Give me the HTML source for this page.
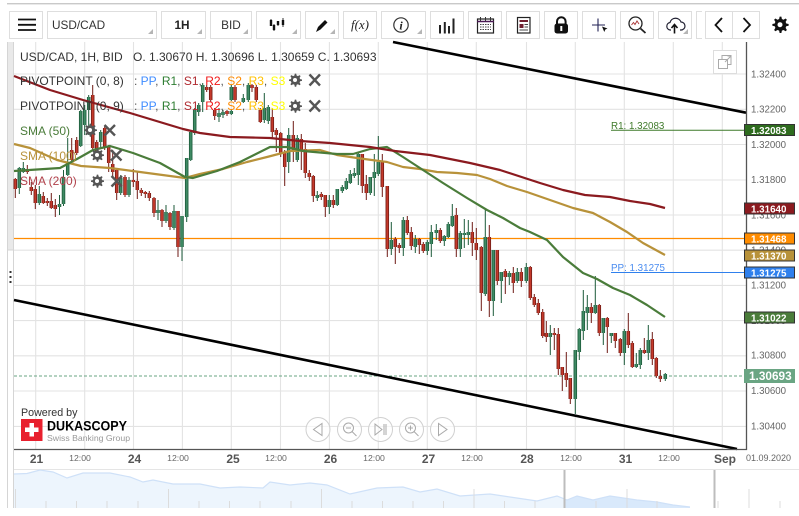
<!DOCTYPE html>
<html lang="en">
<head>
<meta charset="utf-8">
<title>USD/CAD chart</title>
<style>
html,body{margin:0;padding:0;background:#fff;width:799px;height:516px;overflow:hidden}
svg{display:block;font-family:"Liberation Sans",sans-serif;filter:blur(.3px)}
.b{fill:#fff;stroke:#dedede;stroke-width:1}
.tri{fill:#b5b5b5}
.ax{font-size:9.7px;fill:#666}
.tm{font-size:8.7px;fill:#666}
.dy{font-size:12px;font-weight:bold;fill:#555}
.tag{font-size:9.8px;font-weight:bold;fill:#fff}
.lb{font-size:12px;fill:#333}
.gear{fill:#555}
.xx{stroke:#555;stroke-width:2.4;fill:none}
</style>
</head>
<body>
<svg width="799" height="516" viewBox="0 0 799 516" xmlns="http://www.w3.org/2000/svg">
<defs>
<g id="gr"><path id="gearp" d="M0 -6.2l1.4 0 .4 1.9 1.3 .6 1.7 -1 1 1 -1 1.7 .5 1.3 1.9 .4 0 1.4 -1.9 .4 -.5 1.3 1 1.7 -1 1 -1.7 -1 -1.3 .5 -.4 1.9 -1.4 0 -.4 -1.9 -1.3 -.5 -1.7 1 -1 -1 1 -1.7 -.5 -1.3 -1.9 -.4 0 -1.4 1.9 -.4 .5 -1.3 -1 -1.7 1 -1 1.7 1 1.3 -.6z" transform="translate(-.7 -.7)"/></g>
<path id="gb" fill="none" d="M19.3 168V188M23.3 168V172M39.3 194V203M59.5 204V207M63.5 177V204M67.7 163V175M80.7 111V146M84.7 110V125M88.7 97V110M100.7 132V142M120.7 178V193M129 180V195M158 210V213M166 212V221M174 211V228M182 216V247M186.7 158V217M190.7 132V160M194.7 110V133M198.7 105V112M202.7 85V102M219 113V117M223 112V115M231.3 111V114M231.3 87V100M243.3 98V102M248.3 85V100M264.3 108V120M268.3 107V121M288.7 135V162M297.3 138V160M317.3 195V198M329.3 200V207M337.3 189V205M342.3 187V191M346.3 181V189M350.3 174V183M354.3 173V176M358.3 154V175M370.3 177V193M374.3 172V178M378.3 162V174M391.3 240V249M403.3 220V248M415.3 239V247M427.3 242V251M431.3 232V244M436.3 230V233M444.3 236V241M448.3 224V237M452.3 216V226M460.3 233V249M464.3 233V235M468.3 232V235M485.3 237V294M493.3 250V301M501.3 272V281M509.3 273V277M517.3 272V281M526.3 267V281M550.3 333V337M575.3 350V399M579.3 329V352M583.3 311V331M587.3 307V313M595.3 305V313M603.3 318V333M611.3 333V336M624.3 331V353M636.3 364V367M640.3 350V365M648.3 340V353M665.3 374V379"/>
<path id="rb" fill="none" d="M15.3 179V189M27.3 169V172M31.3 187V191M35.3 189V203M43.3 196V203M47.3 201V203M51.3 201V208M55.3 205V209M71.7 150V160M76.7 140V153M92.7 95V148M96.7 142V152M104.7 128V148M108.7 147V163M112.7 164V172M116.7 170V193M125 177V195M133.3 180V182M137.3 181V190M141.3 190V193M145.3 192V194M149.3 193V198M154 198V213M162 210V221M170 213V227M178 211V247M206.7 87V90M210.7 87V100M214.7 110V116M227 111V114M235 87V100M252 85V88M256.3 87V100M260.3 110V122M272.3 117V132M276.3 130V135M280.7 133V153M284.7 152V167M293.3 135V151M301.3 139V151M305.3 149V173M309.3 173V177M313.3 176V196M321.3 194V197M325.3 195V207M333.3 200V205M362.3 154V186M366.3 184V193M382.3 162V187M387.3 186V249M395.3 239V247M399.3 245V248M407.3 220V233M411.3 232V246M419.3 239V245M423.3 244V251M440.3 230V241M456.3 215V249M472.3 232V243M476.3 243V250M481.3 247V293M489.3 237V301M497.3 250V281M505.3 271V277M513.3 273V283M521.3 272V281M530.3 267V298M534.3 297V305M538.3 303V313M542.7 312V336M546.3 333V337M554.3 333V335M558.3 334V369M562.3 367V375M566.3 373V380M570.3 378V399M591.3 307V313M599.3 305V333M607.3 318V327M615.3 333V341M620.3 339V353M628.3 331V345M632.3 343V367M644.3 350V353M652.3 339V359M656.3 358V376M660.3 376V379"/>
</defs>

<!-- top rule -->
<rect x="7" y="3" width="792" height="1.4" fill="#c9c9c9"/>

<!-- left strip -->
<rect x="7.5" y="42" width="6" height="208" fill="#e9e9e9"/>
<path d="M7.5 42V508M13.5 42V508" stroke="#d5d5d5" fill="none"/>
<path d="M7.5 250H13.5" stroke="#d5d5d5"/>
<path d="M10.5 271v2M10.5 276v2M10.5 281v2" stroke="#333" stroke-width="2" fill="none"/>

<!-- toolbar -->
<rect class="b" x="9.5" y="11.5" width="33" height="27"/>
<rect class="b" x="47.5" y="11.5" width="109" height="27"/>
<rect class="b" x="161.5" y="11.5" width="44" height="27"/>
<rect class="b" x="210.5" y="11.5" width="41" height="27"/>
<rect class="b" x="256.5" y="11.5" width="44" height="27"/>
<rect class="b" x="305.5" y="11.5" width="33" height="27"/>
<rect class="b" x="343.5" y="11.5" width="33" height="27"/>
<rect class="b" x="381.5" y="11.5" width="44" height="27"/>
<rect class="b" x="430.5" y="11.5" width="33" height="27"/>
<rect class="b" x="468.5" y="11.5" width="33" height="27"/>
<rect class="b" x="506.5" y="11.5" width="33" height="27"/>
<rect class="b" x="544.5" y="11.5" width="33" height="27"/>
<rect class="b" x="582.5" y="11.5" width="33" height="27"/>
<rect class="b" x="620.5" y="11.5" width="33" height="27"/>
<rect class="b" x="658.5" y="11.5" width="33" height="27"/>
<path d="M702 11.5H696.5V38.5H702" fill="none" stroke="#dedede"/>
<rect class="b" x="705.5" y="11.5" width="54" height="27"/>
<path d="M732.5 11.5V38.5" stroke="#dedede"/>
<path class="tri" d="M153 29v5h-5zM202 29v5h-5zM248 29v5h-5zM297 29v5h-5zM335 29v5h-5zM422 29v5h-5zM688 29v5h-5z"/>
<path d="M18 19.5H36M18 24.8H36M18 30H36" stroke="#111" stroke-width="1.8" fill="none"/>
<text x="52" y="29" font-size="11.8" fill="#333">USD/CAD</text>
<text x="182" y="29" font-size="11.8" font-weight="bold" fill="#222" text-anchor="middle">1H</text>
<text x="231" y="29" font-size="11.8" fill="#333" text-anchor="middle">BID</text>
<!-- candle icon -->
<path d="M271 19v3M274 24v7M278 21v5M283 18v9" stroke="#333" fill="none"/>
<path d="M271 20v6M274 25v5M278 21v4M283 20v5" stroke="#111" stroke-width="2.4" fill="none"/>
<!-- pen -->
<path d="M316 32l2-5 7-7 2.5 2.5-7 7z" fill="#111"/>
<!-- f(x) -->
<text x="360" y="29" font-size="13" font-style="italic" font-family="Liberation Serif,serif" fill="#222" text-anchor="middle">f(x)</text>
<!-- info -->
<circle cx="401" cy="25" r="7.2" fill="none" stroke="#333" stroke-width="1.2"/>
<text x="401" y="29.5" font-size="12" font-style="italic" font-weight="bold" font-family="Liberation Serif,serif" fill="#222" text-anchor="middle">i</text>
<!-- bars -->
<path d="M440 33.5V25M444.8 33.5V22M449 33.5V26M453.5 33.5V18.5" stroke="#222" stroke-width="2" fill="none"/>
<!-- calendar -->
<rect x="477.5" y="19" width="16" height="14" fill="#fff" stroke="#222" stroke-width="1.2"/>
<path d="M477 21.5H494" stroke="#4b1a55" stroke-width="1.4"/>
<path d="M480.5 17v4M485.5 17v4M490.5 17v4" stroke="#333"/>
<path d="M480 24.5H491M480 27H491M480 29.5H491" stroke="#444" stroke-dasharray="1.5 1" fill="none"/>
<!-- news -->
<rect x="517.5" y="17.5" width="12.5" height="15.5" fill="#fff" stroke="#222" stroke-width="1.2"/>
<rect x="519.5" y="20" width="8.5" height="2" fill="#702030"/>
<rect x="519.5" y="24" width="4" height="4" fill="#702030"/>
<path d="M524.5 24.5H528M524.5 27H528M519.5 30H528" stroke="#444" fill="none"/>
<!-- lock -->
<path d="M557 24v-2.5a4.3 4.3 0 0 1 8.6 0V24" fill="none" stroke="#111" stroke-width="2"/>
<rect x="554.5" y="23.5" width="13.5" height="10" rx="2.5" fill="#111"/>
<rect x="560.3" y="26" width="2" height="5" fill="#fff"/>
<!-- crosshair -->
<path d="M598 18.5v13M592 25h13" stroke="#225" stroke-width="1.1" fill="none"/>
<path d="M602 26.5l5.5 2-2.2 1-1 2.5z" fill="#111"/>
<!-- search -->
<circle cx="635.5" cy="23.5" r="6.5" fill="#fff" stroke="#222" stroke-width="1.3"/>
<path d="M640.5 28.5l5 4.5" stroke="#222" stroke-width="1.8"/>
<path d="M631.5 25l2-2.5 1.5 2 2-3.5 2 3" fill="none" stroke="#a33" stroke-width=".9"/>
<!-- cloud -->
<path d="M671 30h-1a3.8 3.8 0 0 1 0-7.5 5.8 5.8 0 0 1 11-.5 4 4 0 0 1 0 8h-1" fill="#fff" stroke="#223" stroke-width="1.2"/>
<path d="M674.5 33.5v-8M671.5 28l3-3.5 3 3.5" fill="none" stroke="#111" stroke-width="1.6"/>
<!-- arrows -->
<path d="M722 18l-6.5 7 6.5 7" fill="none" stroke="#111" stroke-width="1.8"/>
<path d="M743.5 18l6.5 7-6.5 7" fill="none" stroke="#111" stroke-width="1.8"/>
<!-- main gear -->
<g transform="translate(780.5 25.2) scale(1.25)" fill="#111"><use href="#gearp"/></g>
<circle cx="780" cy="24.7" r="2.5" fill="#fff"/>

<!-- grid -->
<path d="M35.7 42V449M84.7 42V449M133.5 42V449M182.4 42V449M231.3 42V449M280.5 42V449M329.4 42V449M378.3 42V449M427.3 42V449M476.3 42V449M526.5 42V449M575.3 42V449M624.3 42V449M673.3 42V449M722.3 42V449" stroke="#e3e3e3" stroke-width="1.1" fill="none"/>
<path d="M14 74H746M14 109.3H746M14 144.5H746M14 180H746M14 215H746M14 250.2H746M14 285.4H746M14 320.6H746M14 355.8H746M14 391H746M14 426.4H746" stroke="#e3e3e3" stroke-width="1.1" fill="none"/>

<!-- levels -->
<path d="M14 238.5H746" stroke="#ff8c00" stroke-width="1.3"/>
<path d="M611 130.3H746" stroke="#3f7a2a" stroke-width="1"/>
<path d="M611 272.5H746" stroke="#2f80ed" stroke-width="1"/>
<text x="611" y="129" font-size="9.8" fill="#3f7a2a">R1: 1.32083</text>
<text x="611" y="271" font-size="9.8" fill="#4a8cf0">PP: 1.31275</text>
<path d="M14 376H746" stroke="#6aa583" stroke-dasharray="3 2" fill="none"/>

<!-- candles -->
<path fill="none" stroke="#1c5a3a" d="M19.3 167V194M23.3 162V173M39.3 186V205M59.5 195V215M63.5 170V206M67.7 138V176M80.7 110V147M84.7 105V135M88.7 95V135M100.7 130V148M120.7 175V195M129 177V197M158 200V220M166 205V223M174 205V230M182 216V261M186.7 158V222M190.7 130V161M194.7 108V135M198.7 103V116M202.7 83V112M219 108V122M223 110V118M231.3 109V115M231.3 85V101M243.3 94V103M248.3 83V102M264.3 93V123M268.3 105V124M288.7 128V173M297.3 135V162M317.3 191V201M329.3 195V214M337.3 189V206M342.3 185V193M346.3 178V190M350.3 170V184M354.3 168V178M358.3 152V185M370.3 177V195M374.3 154V196M378.3 136V176M391.3 222V255M403.3 217V256M415.3 235V253M427.3 240V255M431.3 225V257M436.3 224V240M444.3 235V246M448.3 222V238M452.3 204V227M460.3 231V257M464.3 219V248M468.3 220V245M485.3 210V296M493.3 250V316M501.3 272V303M509.3 271V285M517.3 268V283M526.3 263V283M550.3 325V355M575.3 350V414M579.3 328V360M583.3 290V340M587.3 295V330M595.3 276V314M603.3 318V345M611.3 333V343M624.3 329V365M636.3 353V368M640.3 348V369M648.3 325V360M665.3 373V381"/>
<path fill="none" stroke="#6e1a14" d="M15.3 178V198M27.3 165V174M31.3 182V195M35.3 185V209M43.3 192V204M47.3 198V206M51.3 193V209M55.3 199V217M71.7 138V162M76.7 137V155M92.7 85V150M96.7 140V154M104.7 126V150M108.7 145V172M112.7 150V178M116.7 168V200M125 175V197M133.3 169V187M137.3 172V199M141.3 188V196M145.3 191V198M149.3 191V201M154 197V217M162 209V227M170 212V230M178 211V257M206.7 85V92M210.7 85V102M214.7 108V120M227 110V116M235 85V102M252 84V92M256.3 85V102M260.3 108V123M272.3 108V138M276.3 128V152M280.7 132V157M284.7 150V186M293.3 121V162M301.3 134V170M305.3 143V178M309.3 170V181M313.3 175V202M321.3 192V200M325.3 195V217M333.3 195V208M362.3 154V193M366.3 175V200M382.3 154V197M387.3 186V257M395.3 237V264M399.3 243V253M407.3 216V235M411.3 227V250M419.3 238V254M423.3 242V253M440.3 228V243M456.3 208V257M472.3 222V256M476.3 228V260M481.3 246V311M489.3 225V317M497.3 250V285M505.3 269V294M513.3 267V293M521.3 268V287M530.3 266V300M534.3 294V307M538.3 299V315M542.7 309V338M546.3 321V342M554.3 328V350M558.3 328V375M562.3 367V391M566.3 352V387M570.3 378V404M591.3 303V323M599.3 304V336M607.3 317V353M615.3 333V348M620.3 338V356M628.3 313V348M632.3 341V368M644.3 338V354M652.3 332V365M656.3 357V378M660.3 370V382"/>
<use href="#gb" stroke="#1c5a3a" stroke-width="3.5"/>
<use href="#gb" stroke="#3f8a64" stroke-width="1.9"/>
<use href="#rb" stroke="#6e1a14" stroke-width="3.5"/>
<use href="#rb" stroke="#c4392b" stroke-width="1.9"/>

<!-- moving averages -->
<polyline fill="none" stroke="#b8923a" stroke-width="2.2" stroke-linejoin="round" points="14,144 30,148 57,160 81,166 110,168 140,172 185,178 200,174 223,169 247,162 267,157 290,151 320,150 337,155 357,158 387,162 403,167 420,169 437,172 457,173 477,175 490,179 507,186 527,192 550,200 573,208 593,213 610,222 627,232 643,243 665,255"/>
<polyline fill="none" stroke="#4a7c3a" stroke-width="2.2" stroke-linejoin="round" points="14,171 60,168 77,159 93,150 110,146 133,153 160,163 185,177 193,178 217,171 240,162 270,147 287,147 303,151 337,154 353,154 370,149 387,147 403,157 423,170 443,183 467,198 487,210 503,218 520,228 530,232 547,240 563,257 583,273 597,279 613,288 630,295 647,305 665,317"/>
<polyline fill="none" stroke="#8b1a1f" stroke-width="2.2" stroke-linejoin="round" points="14,76 50,90 83,100 130,113 183,129 200,133 230,137 270,138 300,141 330,143 370,147 395,151 430,155 470,163 500,170 540,183 563,190 585,195 610,197 630,201 650,204 665,208"/>

<!-- trend lines -->
<path d="M393 42L746 112.7" stroke="#000" stroke-width="2.6" fill="none"/>
<path d="M14 300L737 449" stroke="#000" stroke-width="2.6" fill="none"/>

<!-- legend -->
<text class="lb" x="20" y="61">USD/CAD, 1H, BID</text>
<text class="lb" x="133" y="61">O. 1.30670 H. 1.30696 L. 1.30659 C. 1.30693</text>
<text class="lb" x="20" y="85">PIVOTPOINT (0, 8)</text>
<text font-size="12" x="134" y="85" xml:space="preserve"><tspan fill="#555">: </tspan><tspan fill="#3f8cff">PP</tspan><tspan fill="#555">, </tspan><tspan fill="#2e7d32">R1</tspan><tspan fill="#555">, </tspan><tspan fill="#b02a30">S1</tspan><tspan fill="#555">, </tspan><tspan fill="#f01818">R2</tspan><tspan fill="#555">, </tspan><tspan fill="#ff8a00">S2</tspan><tspan fill="#555">, </tspan><tspan fill="#ffc000">R3</tspan><tspan fill="#555">, </tspan><tspan fill="#ffff00">S3</tspan></text>
<text class="lb" x="20" y="110">PIVOTPOINT (0, 9)</text>
<text font-size="12" x="134" y="110" xml:space="preserve"><tspan fill="#555">: </tspan><tspan fill="#3f8cff">PP</tspan><tspan fill="#555">, </tspan><tspan fill="#2e7d32">R1</tspan><tspan fill="#555">, </tspan><tspan fill="#b02a30">S1</tspan><tspan fill="#555">, </tspan><tspan fill="#f01818">R2</tspan><tspan fill="#555">, </tspan><tspan fill="#ff8a00">S2</tspan><tspan fill="#555">, </tspan><tspan fill="#ffc000">R3</tspan><tspan fill="#555">, </tspan><tspan fill="#ffff00">S3</tspan></text>
<text font-size="12" x="20" y="135" fill="#4a7c3a">SMA (50)</text>
<text font-size="12" x="20" y="160" fill="#b8923a">SMA (100)</text>
<text font-size="12" x="20" y="185" fill="#b0404a">SMA (200)</text>

<!-- gears and close marks -->
<g class="gear">
<use href="#gearp" transform="translate(295.5 80.5)"/>
<use href="#gearp" transform="translate(295.5 106.5)"/>
<use href="#gearp" transform="translate(90.5 130.5)"/>
<use href="#gearp" transform="translate(97.5 155.5)"/>
<use href="#gearp" transform="translate(97.5 181.5)"/>
</g>
<g fill="#fff">
<circle cx="295" cy="80" r="2"/><circle cx="295" cy="106" r="2"/><circle cx="90" cy="130" r="2"/><circle cx="97" cy="155" r="2"/><circle cx="97" cy="181" r="2"/>
</g>
<path class="xx" d="M309.5 74.5l10.5 11M320 74.5l-10.5 11M309.5 100.5l10.5 11M320 100.5l-10.5 11M104.5 125l10.5 10.5M115 125l-10.5 10.5M111 150l10.5 10.500M121.5 150l-10.5 10.5M111.5 176l10.5 10.5M122 176l-10.5 10.5"/>

<!-- expand icon -->
<rect x="713.5" y="50.5" width="23" height="23" fill="#fff" stroke="#ddd"/>
<path d="M718.5 59.5h9v9h-9zM722 59.5v-4h9v9h-3.5M725 62l6-6M727.5 56h3.500v3.500" fill="none" stroke="#aaa"/>

<!-- axes -->
<path d="M746.5 42V449.5H14" stroke="#555" stroke-width="1.3" fill="none"/>
<text class="ax" x="751" y="77.5">1.32400</text>
<text class="ax" x="751" y="112.5">1.32200</text>
<text class="ax" x="751" y="148">1.32000</text>
<text class="ax" x="751" y="183">1.31800</text>
<text class="ax" x="751" y="218.5">1.31600</text>
<text class="ax" x="751" y="253.5">1.31400</text>
<text class="ax" x="751" y="288.5">1.31200</text>
<text class="ax" x="751" y="324">1.31000</text>
<text class="ax" x="751" y="358.5">1.30800</text>
<text class="ax" x="751" y="394">1.30600</text>
<text class="ax" x="751" y="429.5">1.30400</text>

<!-- price tags -->
<rect x="744.5" y="124.5" width="50" height="11" fill="#2e6b1e" stroke="#333"/>
<text class="tag" x="751" y="134">1.32083</text>
<rect x="744.5" y="203" width="50" height="11" fill="#8b1a1f" stroke="#333"/>
<text class="tag" x="751" y="212.5">1.31640</text>
<rect x="744.5" y="233" width="50" height="11" fill="#ff8c00" stroke="#333"/>
<text class="tag" x="751" y="242.5">1.31468</text>
<rect x="744.5" y="250" width="50" height="11" fill="#b8923a" stroke="#333"/>
<text class="tag" x="751" y="259.5">1.31370</text>
<rect x="744.5" y="267" width="50" height="11" fill="#2f80ed" stroke="#333"/>
<text class="tag" x="751" y="276.5">1.31275</text>
<rect x="744.5" y="312" width="50" height="11" fill="#4a7c3a" stroke="#333"/>
<text class="tag" x="751" y="321.5">1.31022</text>
<rect x="744" y="369" width="51" height="14" fill="#6aa583"/>
<text x="749" y="380" font-size="11.8" font-weight="bold" fill="#fff">1.30693</text>

<!-- time axis -->
<g text-anchor="middle">
<text class="dy" x="36.5" y="463">21</text><text class="tm" x="80" y="461">12:00</text>
<text class="dy" x="134.5" y="463">24</text><text class="tm" x="178" y="461">12:00</text>
<text class="dy" x="233" y="463">25</text><text class="tm" x="276" y="461">12:00</text>
<text class="dy" x="330.5" y="463">26</text><text class="tm" x="374" y="461">12:00</text>
<text class="dy" x="428.5" y="463">27</text><text class="tm" x="472" y="461">12:00</text>
<text class="dy" x="527" y="463">28</text><text class="tm" x="571" y="461">12:00</text>
<text class="dy" x="625.5" y="463">31</text><text class="tm" x="669" y="461">12:00</text>
<text class="dy" x="725" y="463">Sep</text>
</g>
<text x="746" y="461" font-size="9" fill="#666">01.09.2020</text>
<path d="M14 469.5H799" stroke="#e5e5e5"/>

<!-- navigator -->
<polygon fill="#edf5fd" points="14,474 27,473.5 40,470 53,472 67,478 83,473 110,473 130,477 143,482 153,480 173,484 200,484 220,488 240,487 263,488 270,482 290,485 310,483 327,485 350,494 377,488 403,487 420,492 437,489 460,496 490,494 510,497 537,501 557,496 564,498 564,508 14,508"/>
<polygon fill="#d9e9fb" points="564,498 567,500 577,496 593,500 610,496 637,500 657,502 673,505 690,507 690,508 564,508"/>
<polyline fill="none" stroke="#cfe1f8" stroke-width="1.2" points="14,474 27,473.5 40,470 53,472 67,478 83,473 110,473 130,477 143,482 153,480 173,484 200,484 220,488 240,487 263,488 270,482 290,485 310,483 327,485 350,494 377,488 403,487 420,492 437,489 460,496 490,494 510,497 537,501 557,496 567,500 577,496 593,500 610,496 637,500 657,502 673,505 690,507"/>
<path d="M15.5 489V508M46 501V508M76.5 501V508M107 501V508M138 501V508M168.5 489V508M199 501V508M229.5 501V508M260 501V508M291 501V508M321.5 489V508M352 501V508M382.5 501V508M413 501V508M443.5 501V508M474 489V508M504.5 501V508M535 501V508M596 501V508M627 489V508M657 501V508M718 501V508M749 489V508M780 501V508" stroke="#dcdcdc" fill="none"/>
<path d="M564.5 470V508M714.5 470V508" stroke="#bdbdbd" stroke-width="2" fill="none"/>

<!-- nav buttons -->
<g fill="#fff" fill-opacity=".6" stroke="#d0d0d0">
<circle cx="318" cy="429.5" r="12"/><circle cx="349.5" cy="429.5" r="12"/><circle cx="380.5" cy="429.5" r="12"/><circle cx="411.5" cy="429.5" r="12"/><circle cx="442.5" cy="429.5" r="12"/>
</g>
<g fill="none" stroke="#aaa">
<path d="M322 423.5v12l-8.500-6z"/>
<circle cx="348.5" cy="428" r="5"/><path d="M352 431.5l4.500 4.500M346 428h5"/>
<path d="M375 424v11l7-5.500zM384 424v11M386 424v11"/>
<circle cx="410.5" cy="428" r="5"/><path d="M414 431.5l4.500 4.500M408 428h5M410.500 425.500v5"/>
<path d="M438.5 423.5v12l8.500-6z"/>
</g>

<!-- logo -->
<text x="21" y="416" font-size="10.7" fill="#333">Powered by</text>
<rect x="21" y="419" width="21.5" height="22" fill="#e8202e"/>
<path d="M29.5 423h4.500v4.500h4.500v4.500h-4.500v4.500h-4.500v-4.500h-4.500v-4.500h4.500z" fill="#fff"/>
<text x="47" y="430.5" font-size="13.5" font-weight="bold" fill="#000" textLength="80" lengthAdjust="spacingAndGlyphs">DUKASCOPY</text>
<text x="47" y="441" font-size="8.7" fill="#999">Swiss Banking Group</text>
</svg>
</body>
</html>
